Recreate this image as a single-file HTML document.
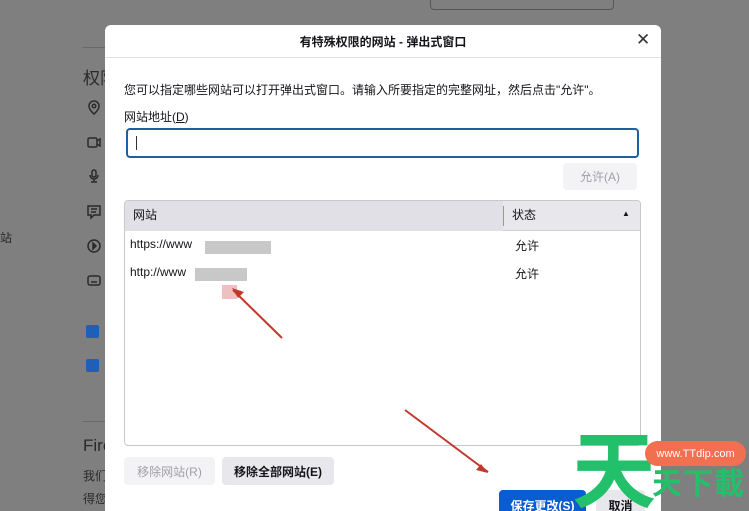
<!DOCTYPE html>
<html style="width:749px;height:511px;overflow:hidden"><head><meta charset="utf-8"><style>
*{margin:0;padding:0;box-sizing:border-box}
body{width:749px;height:511px;overflow:hidden;background:#7f7f7f;position:relative;font-family:"Liberation Sans","Noto Sans CJK SC",sans-serif;color:#15141a}
.a{position:absolute}
.bg{color:#2a2a2a}
.dlg{left:105px;top:25px;width:556px;height:486px;background:#fff;border-radius:6px 6px 0 0;overflow:hidden}
.t{font-size:12px}
.btn{position:absolute;border-radius:4px;font-size:12px;display:flex;align-items:center;justify-content:center}
</style></head><body>
<div class="a" style="left:430px;top:-4px;width:184px;height:14px;border:1px solid #555;border-radius:4px"></div>
<div class="a" style="left:83px;top:47px;width:30px;border-top:1px solid #6a6a6a"></div>
<div class="a bg" style="left:83px;top:64px;font-size:17px">权限</div>
<div class="a bg" style="left:0;top:229px;font-size:12px">站</div>
<svg class="a" style="left:84px;top:98px" width="20" height="200" fill="none" stroke="#2a2a2a" stroke-width="1.5">
<path d="M10 3a5 5 0 0 1 5 5c0 4-5 8-5 8s-5-4-5-8a5 5 0 0 1 5-5z"/><circle cx="10" cy="8" r="1.8"/>
<rect x="4" y="40" width="9" height="9" rx="1.5"/><path d="M13 43l3-2v7l-3-2"/>
<rect x="8" y="72" width="4" height="7" rx="2"/><path d="M6 77a4 4 0 0 0 8 0M10 81v3M7 84h6"/>
<path d="M4 108h12v9h-6l-3 3v-3h-3z M7 111h6M7 114h5"/>
<circle cx="10" cy="148" r="6"/><path d="M9 145l3 3-3 3z" fill="#2a2a2a"/>
<rect x="4" y="178" width="12" height="9" rx="2"/><path d="M7 184h6"/>
</svg>
<div class="a" style="left:86px;top:325px;width:13px;height:13px;background:#1f5fb8;border-radius:2px"></div>
<div class="a" style="left:86px;top:359px;width:13px;height:13px;background:#1f5fb8;border-radius:2px"></div>
<div class="a" style="left:83px;top:421px;width:30px;border-top:1px solid #6a6a6a"></div>
<div class="a bg" style="left:83px;top:436px;font-size:17px">Fire</div>
<div class="a bg" style="left:83px;top:467px;font-size:12px">我们</div>
<div class="a bg" style="left:83px;top:490px;font-size:12px">得您</div>

<div class="a dlg">
<div class="a t" style="left:0;width:556px;top:8px;text-align:center;font-weight:bold">有特殊权限的网站 - 弹出式窗口</div>
<div class="a" style="left:531px;top:5px;font-size:17px;color:#333">✕</div>
<div class="a" style="left:0;top:32px;width:556px;border-top:1px solid #e0e0e0"></div>
<div class="a t" style="left:19px;top:56px">您可以指定哪些网站可以打开弹出式窗口。请输入所要指定的完整网址，然后点击"允许"。</div>
<div class="a t" style="left:19px;top:83px">网站地址(<u>D</u>)</div>
<div class="a" style="left:21px;top:103px;width:513px;height:30px;border:2px solid #1f5f9f;border-radius:4px"><div class="a" style="left:8px;top:6px;height:14px;border-left:1px solid #333"></div></div>
<div class="btn" style="left:458px;top:138px;width:74px;height:27px;background:#f3f3f5;color:#a0a0a8">允许(A)</div>
<div class="a" style="left:19px;top:175px;width:517px;height:246px;border:1px solid #c8c8cc;border-radius:4px;overflow:hidden">
<div class="a" style="left:0;top:0;width:517px;height:30px;background:#e8e8ec;border-bottom:1px solid #d0d0d4"></div>
<div class="a" style="left:0;top:0;width:378px;height:30px;background:#e0e0e6"></div>
<div class="a" style="left:378px;top:5px;height:20px;border-left:1px solid #999"></div>
<div class="a t" style="left:8px;top:5px">网站</div>
<div class="a t" style="left:387px;top:5px">状态</div>
<div class="a" style="left:497px;top:8px;font-size:8px">▲</div>
<div class="a t" style="left:5px;top:36px">https://www</div>
<div class="a" style="left:80px;top:40px;width:66px;height:13px;background:#c8c8c8"></div>
<div class="a t" style="left:390px;top:36px">允许</div>
<div class="a t" style="left:5px;top:64px">http://www</div>
<div class="a" style="left:70px;top:67px;width:52px;height:13px;background:#c8c8c8"></div>
<div class="a" style="left:97px;top:84px;width:15px;height:14px;background:#f0c0c0"></div>
<div class="a t" style="left:390px;top:64px">允许</div>
</div>
<div class="btn" style="left:19px;top:432px;width:91px;height:28px;background:#f3f3f5;color:#a0a0a8">移除网站(R)</div>
<div class="btn" style="left:117px;top:432px;width:112px;height:28px;background:#e8e8ec;font-weight:bold">移除全部网站(E)</div>
<div class="btn" style="left:394px;top:465px;width:87px;height:30px;background:#0a5cd0;color:#fff;font-weight:bold">保存更改(S)</div>
<div class="btn" style="left:491px;top:465px;width:49px;height:30px;background:#e8e8ec;font-weight:bold">取消</div>
</div>
<svg class="a" style="left:0;top:0" width="749" height="511">
<path d="M233 290L282 338" stroke="#c0392b" stroke-width="2"/><path d="M232 288l12 4-6 6z" fill="#c0392b"/>
<path d="M405 410L488 472" stroke="#c0392b" stroke-width="2"/><path d="M488 473l-12-3 5-6z" fill="#c0392b"/>
</svg>
<div class="a" style="left:572px;top:430px;font-size:84px;font-weight:bold;color:#22c06a;line-height:1">天</div>
<div class="a" style="left:645px;top:441px;width:101px;height:25px;background:#f07050;border-radius:13px;color:#fff;font-size:11px;display:flex;align-items:center;justify-content:center">www.TTdip.com</div>
<div class="a" style="left:652px;top:470px;font-size:30px;font-weight:bold;color:#22c06a;line-height:1;letter-spacing:1px">天下載</div>
</body></html>
